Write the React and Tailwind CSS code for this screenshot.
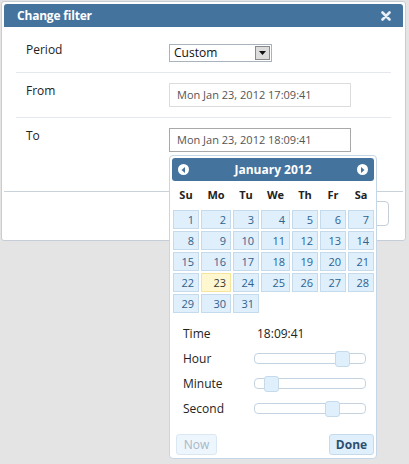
import React from "react";

const font = { fontFamily: '"Open Sans", "Noto Sans", sans-serif' };

const cols = "grid grid-cols-[26px_30px_26px_29px_26px_26px_26px] gap-x-[2px]";

function Arrow({ dir }) {
  return (
    <span className="w-[11px] h-[11px] rounded-full bg-white flex items-center justify-center">
      <svg width="5" height="6" viewBox="0 0 5 6">
        {dir === "left" ? (
          <path d="M4 0 L4 6 L0.5 3 Z" fill="#44739e" />
        ) : (
          <path d="M1 0 L1 6 L4.5 3 Z" fill="#44739e" />
        )}
      </svg>
    </span>
  );
}

function Slider({ left }) {
  return (
    <div className="relative w-[112px] h-[11px] border border-[#c5d3e0] rounded-[4px] bg-white">
      <div
        className={
          "absolute top-[-3px] w-[15px] h-[16px] rounded-[3px] border border-[#c5dbec] bg-[#dfeffc] " +
          left
        }
      />
    </div>
  );
}

export default function App() {
  const days = [];
  for (let i = 1; i <= 31; i++) days.push(i);
  return (
    <div className="relative w-[409px] h-[464px] bg-[#e4e4e4] overflow-hidden" style={font}>
      {/* Dialog */}
      <div className="ml-[1px] mt-[1px] w-[405px] h-[240px] border border-[#c5ced7] bg-white p-[2px] rounded-[3px] flex flex-col">
        <div className="h-[23px] bg-[#44739e] rounded-t-[3px] flex items-center justify-between pl-[13px] pr-[12px]">
          <span className="text-white text-[12px] font-bold tracking-[-0.2px]">Change filter</span>
          <svg width="10" height="10" viewBox="0 0 10 10">
            <path d="M1.5 1.5 L8.5 8.5 M8.5 1.5 L1.5 8.5" stroke="#e8eef5" strokeWidth="2.6" strokeLinecap="round" />
          </svg>
        </div>
        <div className="flex-1 px-[12px] pt-[7px]">
          <div className="flex py-[10px] border-b border-[#e4e8ec]">
            <div className="w-[153px] pl-[10px] text-[12px] text-[#222] leading-[16px] -mt-[2px]">Period</div>
            <div className="w-[103px] h-[18px] border border-[#a9b3bd] flex items-center justify-between bg-white">
              <span className="pl-[4px] text-[12px] text-[#111] leading-[16px]">Custom</span>
              <span className="w-[15px] h-[14px] mr-[1px] bg-[#dcdcdc] border border-[#8a8a8a] flex items-center justify-center">
                <svg width="7" height="4" viewBox="0 0 7 4">
                  <path d="M0 0 L7 0 L3.5 4 Z" fill="#111" />
                </svg>
              </span>
            </div>
          </div>
          <div className="flex py-[10px] border-b border-[#e4e8ec]">
            <div className="w-[153px] pl-[10px] text-[12px] text-[#222] leading-[16px]">From</div>
            <div className="w-[182px] h-[24px] border border-[#dcdcdc] flex items-center pl-[7px] text-[11px] text-[#555]">
              Mon Jan 23, 2012 17:09:41
            </div>
          </div>
          <div className="flex py-[10px]">
            <div className="w-[153px] pl-[10px] text-[12px] text-[#222] leading-[16px]">To</div>
            <div className="w-[182px] h-[24px] border border-[#a9a9a9] flex items-center pl-[7px] text-[11px] text-[#555]">
              Mon Jan 23, 2012 18:09:41
            </div>
          </div>
        </div>
        <div className="h-[47px] border-t border-[#c9d1d9] flex justify-end pt-[9px] pr-[14px]">
          <button className="w-[60px] h-[25px] border border-[#c5ced7] rounded-[4px] bg-white" aria-label="OK" />
        </div>
      </div>

      {/* Datepicker popup */}
      <div className="absolute left-[169px] top-[155px] w-[208px] border border-[#c5d6e6] rounded-[4px] bg-white p-[2px]">
        <div className="h-[23px] bg-[#44739e] rounded-[3px] flex items-center justify-between px-[6px]">
          <Arrow dir="left" />
          <span className="text-white text-[12px] font-bold">January 2012</span>
          <Arrow dir="right" />
        </div>
        <div className={cols + " px-[1px] h-[22px] mt-[3px] items-center"}>
          {["Su", "Mo", "Tu", "We", "Th", "Fr", "Sa"].map((d) => (
            <div key={d} className="text-center text-[11px] font-bold text-[#222]">
              {d}
            </div>
          ))}
        </div>
        <div className={cols + " gap-y-[2px] px-[1px] mt-[4px]"}>
          {days.map((d) => (
            <div
              key={d}
              className={
                d === 23
                  ? "h-[19px] border border-[#f5e59a] bg-[#fff7cf] text-[#363636] text-right pr-[4px] text-[11px] leading-[17px]"
                  : "h-[19px] border border-[#c5dbec] bg-[#dfeffc] text-[#2e6290] text-right pr-[4px] text-[11px] leading-[17px]"
              }
            >
              {d}
            </div>
          ))}
        </div>
        <div className="mt-[9px] pl-[11px] text-[12px] text-[#222]">
          <div className="h-[24px] flex items-center">
            <span className="w-[71px]">Time</span>
            <span className="pl-[3px]">18:09:41</span>
          </div>
          <div className="h-[25px] flex items-center">
            <span className="w-[71px]">Hour</span>
            <Slider left="left-[80px]" />
          </div>
          <div className="h-[25px] flex items-center">
            <span className="w-[71px]">Minute</span>
            <Slider left="left-[9px]" />
          </div>
          <div className="h-[25px] flex items-center">
            <span className="w-[71px]">Second</span>
            <Slider left="left-[70px]" />
          </div>
        </div>
        <div className="mt-[13px] mb-[1px] flex justify-between pl-[4px]">
          <button className="w-[41px] h-[21px] border border-[#dbe8f4] bg-[#eef6fd] rounded-[3px] text-[12px] text-[#a9b7c5]">
            Now
          </button>
          <button className="w-[45px] h-[21px] border border-[#c5dbec] bg-[#dfeffc] rounded-[3px] text-[12px] font-bold text-[#2e4f70]">
            Done
          </button>
        </div>
      </div>
    </div>
  );
}
